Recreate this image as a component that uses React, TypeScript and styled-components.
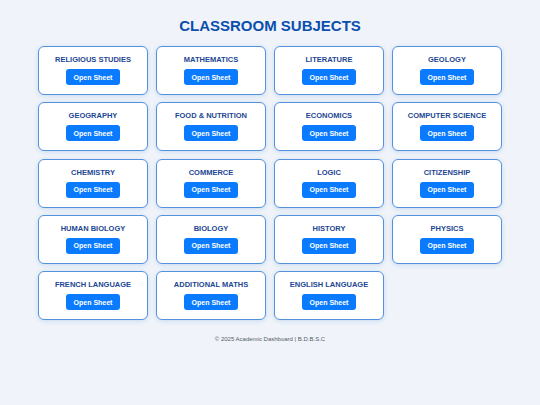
import React from 'react';
import styled, { createGlobalStyle } from 'styled-components';

const GlobalStyle = createGlobalStyle`
  body {
    margin: 0;
    background: #f0f4fa;
    font-family: "Liberation Sans", Arial, sans-serif;
  }
`;

const Page = styled.div`
  padding: 15px 38px 0;
  display: flex;
  flex-direction: column;
  align-items: center;
`;

const Title = styled.h1`
  margin: 0 0 9px;
  font-size: 15px;
  line-height: 22px;
  font-weight: 700;
  color: #0b4fad;
`;

const Grid = styled.div`
  width: 464px;
  display: grid;
  grid-template-columns: repeat(4, 110px);
  column-gap: 8px;
  row-gap: 7.25px;
`;

const Card = styled.div`
  box-sizing: border-box;
  height: 49px;
  background: #ffffff;
  border: 1.5px solid #5592de;
  border-radius: 6px;
  box-shadow: 0 1px 5px rgba(40, 110, 200, 0.2);
  display: flex;
  flex-direction: column;
  align-items: center;
  padding-top: 8px;
`;

const CardTitle = styled.div`
  font-size: 7.5px;
  line-height: 10px;
  font-weight: 700;
  color: #1c4792;
  margin-bottom: 4px;
`;

const Button = styled.button`
  width: 54px;
  height: 16px;
  border: none;
  border-radius: 3px;
  background: #0a7bff;
  color: #ffffff;
  font-family: "Liberation Sans", Arial, sans-serif;
  font-size: 7px;
  font-weight: 700;
  padding: 0;
  cursor: pointer;
`;

const Footer = styled.div`
  margin-top: 16px;
  font-size: 6px;
  color: #555c66;
`;

const subjects = [
  'RELIGIOUS STUDIES',
  'MATHEMATICS',
  'LITERATURE',
  'GEOLOGY',
  'GEOGRAPHY',
  'FOOD & NUTRITION',
  'ECONOMICS',
  'COMPUTER SCIENCE',
  'CHEMISTRY',
  'COMMERCE',
  'LOGIC',
  'CITIZENSHIP',
  'HUMAN BIOLOGY',
  'BIOLOGY',
  'HISTORY',
  'PHYSICS',
  'FRENCH LANGUAGE',
  'ADDITIONAL MATHS',
  'ENGLISH LANGUAGE',
];

const App: React.FC = () => {
  return (
    <>
      <GlobalStyle />
      <Page>
        <Title>CLASSROOM SUBJECTS</Title>
        <Grid>
          {subjects.map((name) => (
            <Card key={name}>
              <CardTitle>{name}</CardTitle>
              <Button>Open Sheet</Button>
            </Card>
          ))}
        </Grid>
        <Footer>© 2025 Academic Dashboard | B.D.B.S.C</Footer>
      </Page>
    </>
  );
};

export default App;
